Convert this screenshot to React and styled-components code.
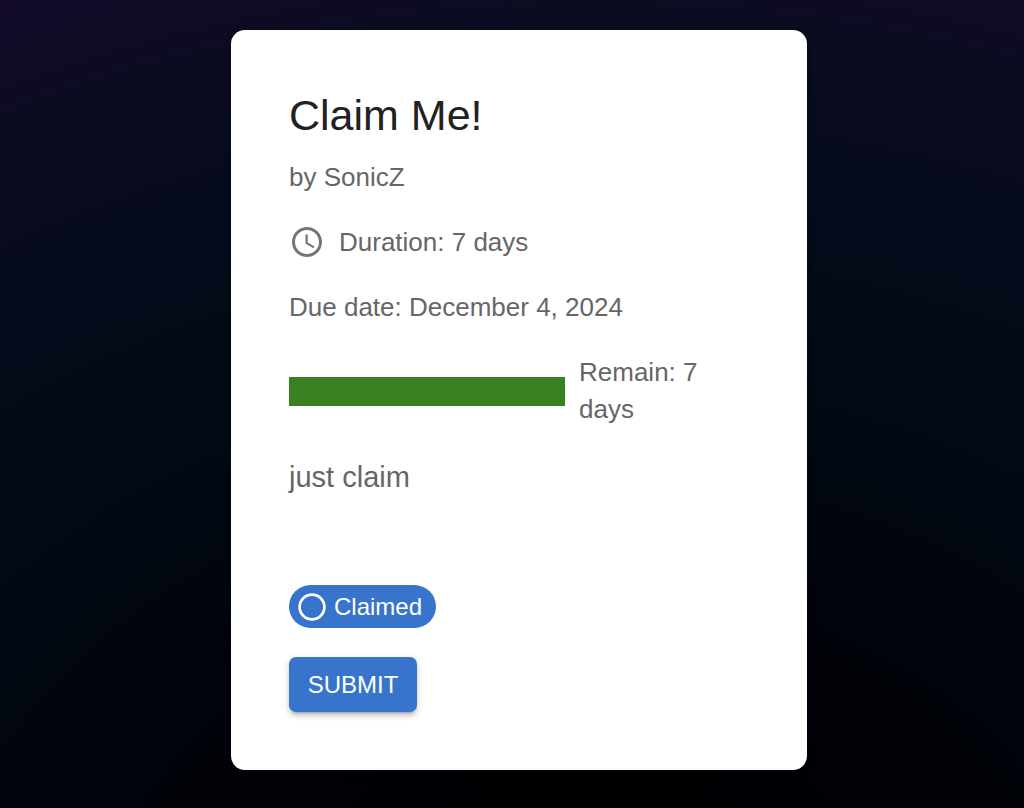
import React, { useState } from "react";
import styled, { createGlobalStyle } from "styled-components";

const GlobalStyle = createGlobalStyle`
  * { box-sizing: border-box; }
  body {
    margin: 0;
    min-height: 100vh;
    font-family: "Liberation Sans", Arial, sans-serif;
    background: radial-gradient(ellipse 120% 115% at 58% 120%, #000003 20%, #01040b 45%, #010913 64%, #040b1a 82%, #0b0c20 102%, #130a2b 115%) no-repeat #000309;
  }
`;

const Page = styled.main`
  display: flex;
  justify-content: center;
  align-items: flex-start;
  min-height: 100vh;
  padding: 30px 0 38px 14px;
`;

const Card = styled.article`
  width: 100%;
  max-width: 576px;
  padding: 58px;
  border-radius: 14px;
  background: #fff;
  color: #666;
  box-shadow: 0 2px 6px rgba(0, 0, 0, 0.4);
`;

const Title = styled.h1`
  margin: 0 0 17px;
  font-size: 43px;
  line-height: 54px;
  font-weight: 400;
  color: #212121;
`;

const Line = styled.p`
  display: flex;
  align-items: center;
  gap: 14px;
  margin: 0 0 29px;
  font-size: 26px;
  line-height: 36px;
`;

const Progress = styled(Line)`
  line-height: 37px;
`;

const Bar = styled.div`
  flex: 0 0 60%;
  height: 29px;
  background: #388022;
`;

const Description = styled.p`
  margin: 0 0 88px;
  font-size: 29px;
  line-height: 40px;
`;

const Actions = styled.div`
  display: flex;
  flex-direction: column;
  align-items: flex-start;
  gap: 29px;
`;

const Chip = styled.button`
  display: flex;
  align-items: center;
  gap: 6px;
  height: 43px;
  padding: 0 14px 0 7px;
  border: 0;
  border-radius: 22px;
  background: #3874cb;
  color: #fff;
  font: 400 24px/36px "Liberation Sans", Arial, sans-serif;
  cursor: pointer;
`;

const SubmitButton = styled.button`
  min-width: 128px;
  height: 55px;
  padding: 0 18px;
  border: 0;
  border-radius: 7px;
  background: #3874cb;
  color: #fff;
  font: 400 24px/42px "Liberation Sans", Arial, sans-serif;
  text-transform: uppercase;
  cursor: pointer;
  box-shadow:
    0 5px 2px -4px rgba(0, 0, 0, 0.2),
    0 4px 4px rgba(0, 0, 0, 0.14),
    0 2px 9px rgba(0, 0, 0, 0.12);
`;

const ClockIcon = () => (
  <svg width="36" height="36" viewBox="0 0 24 24" fill="#757575" aria-hidden="true">
    <path d="M11.99 2C6.47 2 2 6.48 2 12s4.47 10 9.99 10C17.52 22 22 17.52 22 12S17.52 2 11.99 2M12 20c-4.42 0-8-3.58-8-8s3.58-8 8-8 8 3.58 8 8-3.58 8-8 8" />
    <path d="M12.5 7H11v6l5.25 3.15.75-1.23-4.5-2.67z" />
  </svg>
);

const RingIcon = () => (
  <svg width="32" height="32" viewBox="0 0 24 24" fill="none" stroke="#fff" strokeWidth="2" aria-hidden="true">
    <circle cx="12" cy="12" r="9.3" />
  </svg>
);

export default function App() {
  const [claimed, setClaimed] = useState(true);
  return (
    <>
      <GlobalStyle />
      <Page>
        <Card>
          <Title>Claim Me!</Title>
          <Line>by SonicZ</Line>
          <Line>
            <ClockIcon />
            Duration: 7 days
          </Line>
          <Line>Due date: December 4, 2024</Line>
          <Progress as="div">
            <Bar role="progressbar" aria-label="Time remaining" aria-valuenow={7} aria-valuemin={0} aria-valuemax={7} />
            <span>Remain: 7 days</span>
          </Progress>
          <Description>just claim</Description>
          <Actions>
            <Chip type="button" aria-pressed={claimed} onClick={() => setClaimed(!claimed)}>
              <RingIcon />
              Claimed
            </Chip>
            <SubmitButton type="submit">Submit</SubmitButton>
          </Actions>
        </Card>
      </Page>
    </>
  );
}
